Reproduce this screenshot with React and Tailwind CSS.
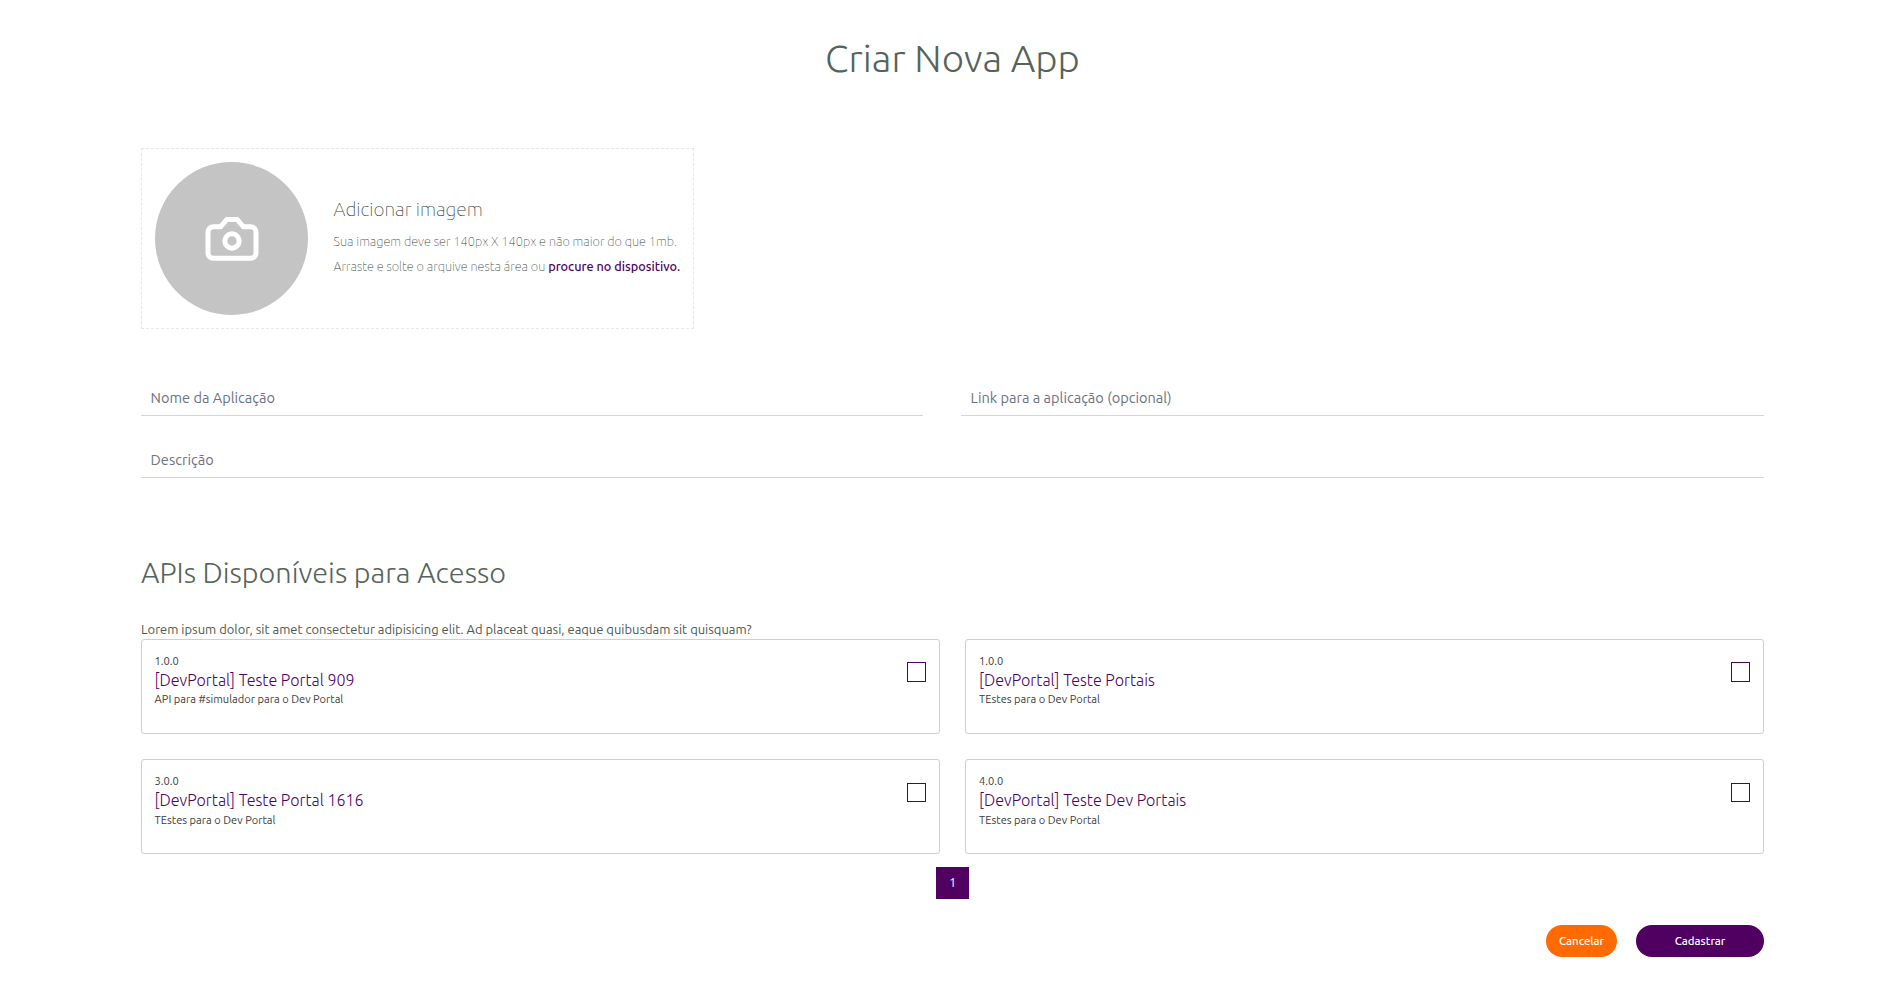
import React from "react";

const apis = [
  { version: "1.0.0", name: "[DevPortal] Teste Portal 909", description: "API para #simulador para o Dev Portal" },
  { version: "1.0.0", name: "[DevPortal] Teste Portais", description: "TEstes para o Dev Portal" },
  { version: "3.0.0", name: "[DevPortal] Teste Portal 1616", description: "TEstes para o Dev Portal" },
  { version: "4.0.0", name: "[DevPortal] Teste Dev Portais", description: "TEstes para o Dev Portal" },
];

function CameraIcon() {
  return (
    <svg className="mt-px h-11 w-[54px]" viewBox="0 0 54 44" fill="none" stroke="#fff" strokeWidth="5" strokeLinejoin="round">
      <path d="M8.3 9.8H15.5L21.7 2.6H32.3L38.5 9.8H45.7a5.3 5.3 0 0 1 5.3 5.3V36a5.3 5.3 0 0 1-5.3 5.3H8.3A5.3 5.3 0 0 1 3 36V15.1a5.3 5.3 0 0 1 5.3-5.3Z" />
      <circle cx="27" cy="24" r="7.2" />
    </svg>
  );
}

function Field({ label, className }) {
  return (
    <input
      placeholder={label}
      className={`h-[38px] border-b border-[#d1d5db] px-[9.6px] text-[14.55px] text-[#6b7280] outline-none placeholder:text-[#6b7280] placeholder:opacity-100 ${className}`}
    />
  );
}

function ApiCard({ api }) {
  return (
    <div className="group flex h-[95px] items-start justify-between rounded-[3px] border border-[#c8d2ce] pr-[13px] pl-[12.6px] even:pl-[13.1px]">
      <div className="pt-[13px]">
        <p className="h-[17px] text-[11.1px] leading-[17px] text-[#3c3c3c]">{api.version}</p>
        <h3 className="h-[21px] text-[16.05px] leading-[21px] font-light text-[#500060]">{api.name}</h3>
        <p className="h-[17px] text-[11.1px] leading-[17px] text-[#3c3c3c] group-nth-[n+3]:mt-px">{api.description}</p>
      </div>
      <span className="mt-[22px] h-5 w-[19px] border border-[#500060] group-nth-[n+3]:mt-[23px] group-nth-[n+3]:h-[19px]" />
    </div>
  );
}

export default function App() {
  return (
    <div className="flex h-[981px] flex-col overflow-hidden bg-white pr-[136px] pl-[141px] font-[Ubuntu,'Open_Sans',sans-serif] text-[#55645a]">
      <h1 className="mt-[34px] h-12 text-center text-[38.5px] leading-[48px] font-light">Criar Nova App</h1>

      <div className="mt-[66px] flex h-[181px] w-[553px] gap-[25.6px] border border-dashed border-[#e5e7eb] p-[13px]">
        <div className="flex h-[153px] w-[153px] shrink-0 items-center justify-center rounded-full bg-[#c4c4c4]">
          <CameraIcon />
        </div>
        <div className="flex flex-col pt-[34px] whitespace-nowrap">
          <h2 className="h-[26px] text-[19.2px] leading-[26px] font-thin text-[#34433a]">Adicionar imagem</h2>
          <p className="mt-[7px] h-[25px] text-[12.8px] leading-[25px] font-thin text-[#34433a]">
            Sua imagem deve ser 140px X 140px e não maior do que 1mb.
          </p>
          <p className="h-[25px] text-[12.8px] leading-[25px] font-thin text-[#34433a]">
            Arraste e solte o arquive nesta área ou <a className="text-[12.7px] font-medium text-[#500060]">procure no dispositivo.</a>
          </p>
        </div>
      </div>

      <div className="mt-[49px] flex justify-between">
        <Field label="Nome da Aplicação" className="w-[782px] pt-0.5" />
        <Field label="Link para a aplicação (opcional)" className="w-[803px] pt-0.5" />
      </div>
      <Field label="Descrição" className="mt-6 w-full shrink-0 pt-px" />

      <h2 className="mt-[76px] h-9 text-[28.9px] leading-9 font-light">APIs Disponíveis para Acesso</h2>
      <p className="mt-[30px] h-[19px] text-[12.95px] leading-[19px] text-[#4a594f]">
        Lorem ipsum dolor, sit amet consectetur adipisicing elit. Ad placeat quasi, eaque quibusdam sit quisquam?
      </p>
      <div className="grid grid-cols-2 gap-[25px]">
        {apis.map((api) => (
          <ApiCard key={api.name} api={api} />
        ))}
      </div>

      <div className="mt-[13px] flex justify-center">
        <button className="h-8 w-[33px] bg-[#500060] text-[12.8px] text-white">1</button>
      </div>

      <div className="mt-[26px] flex justify-end gap-[19px] text-[11.4px] font-medium text-white">
        <button className="h-8 w-[71px] rounded-full bg-[#ff6b00]">Cancelar</button>
        <button className="h-8 w-32 rounded-full bg-[#500060]">Cadastrar</button>
      </div>
    </div>
  );
}
